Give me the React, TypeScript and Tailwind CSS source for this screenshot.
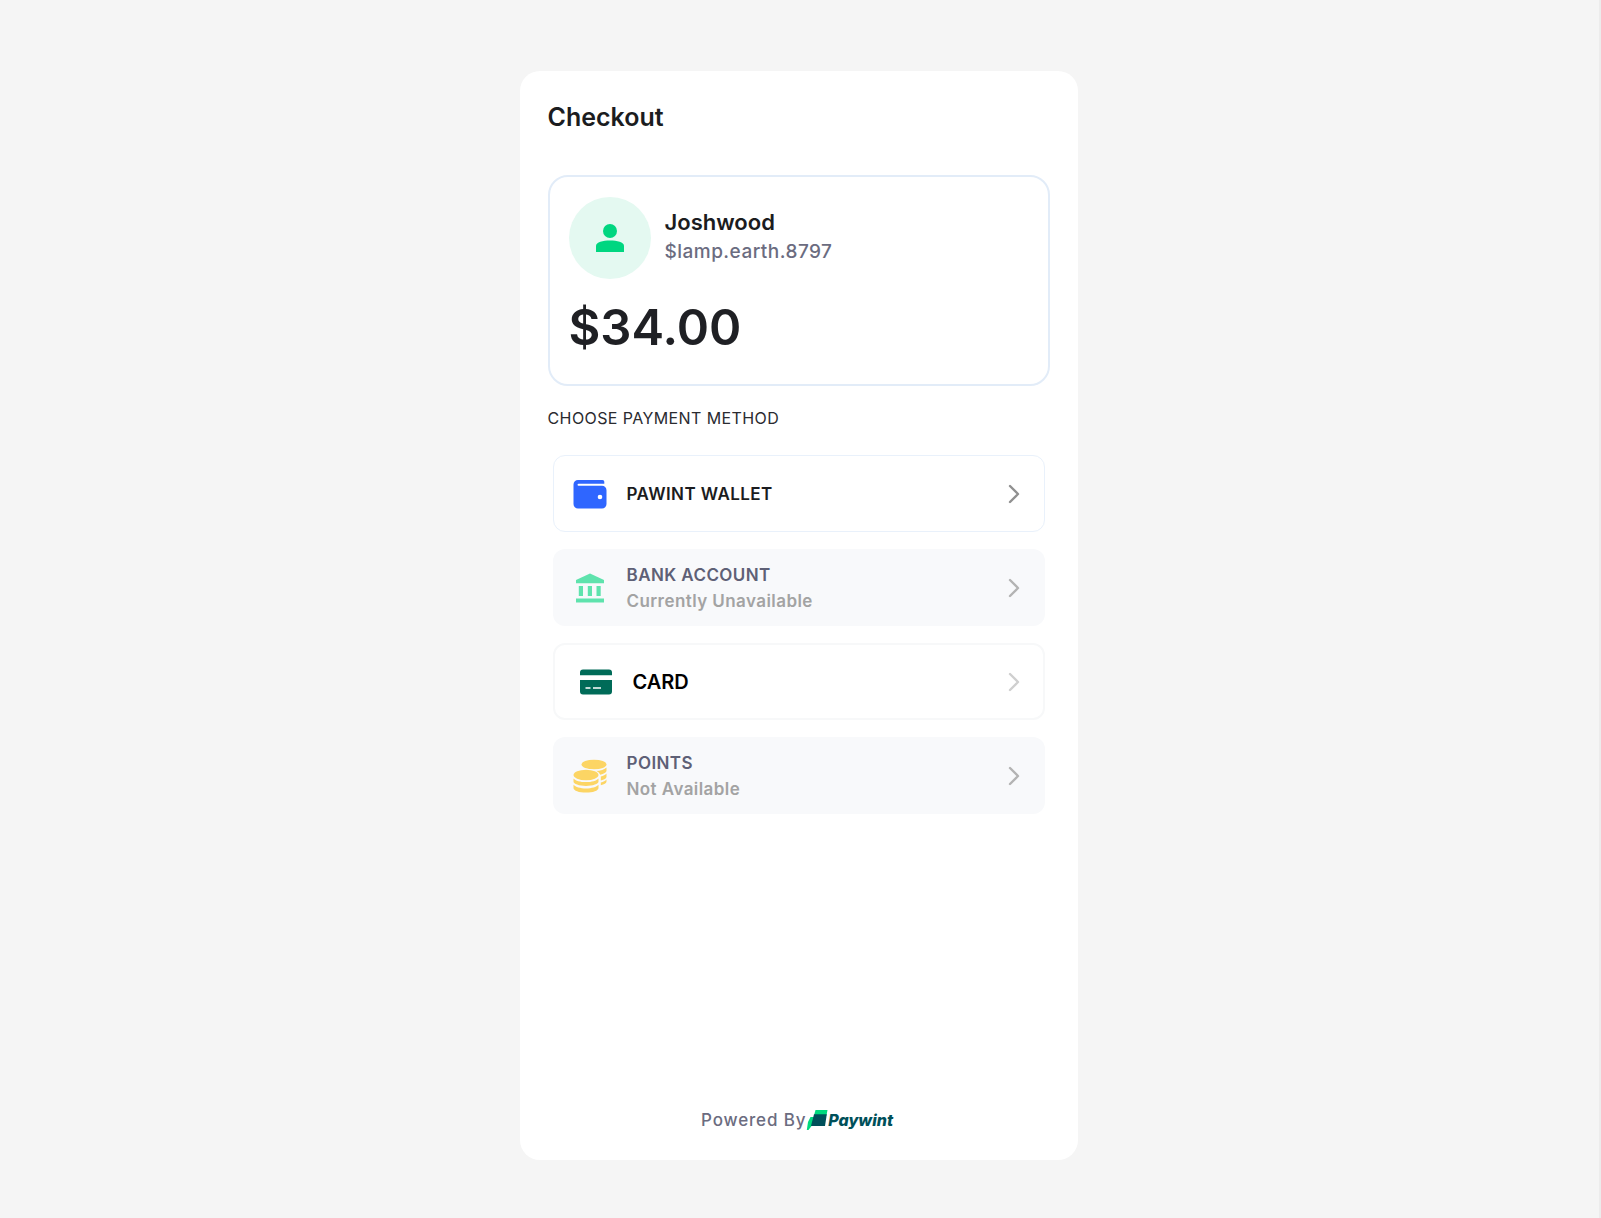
import { clsx } from 'clsx';
import type { ReactNode } from 'react';

type Method = {
  id: string;
  label: string;
  note?: string;
  icon: ReactNode;
  box: string;
  labelStyle: string;
  chevron: string;
  disabled?: boolean;
};

function WalletIcon() {
  return (
    <svg viewBox="0 0 34 34" className="size-[34px]" aria-hidden="true">
      <path
        d="M5 3h24.500a1.800 1.800 0 0 1 1.800 1.800V6.800H5.500a.9.9 0 0 0 0 1.900H29a4.500 4.500 0 0 1 4.500 4.500V27a4.500 4.500 0 0 1-4.500 4.500H5A4.500 4.500 0 0 1 .5 27V7.500A4.500 4.500 0 0 1 5 3Z"
        fill="#2f66ff"
      />
      <circle cx="27" cy="20" r="2.300" fill="#fff" />
    </svg>
  );
}

function BankIcon() {
  return (
    <svg viewBox="0 0 34 34" className="size-[34px]" fill="#5fe3ad" aria-hidden="true">
      <path d="M17 2.500 31 9v3.300H3V9L17 2.500Z" />
      <path d="M5.800 15h4.200v10H5.800zM14.800 15H19v10h-4.200zM23.500 15h4.200v10h-4.200zM3 27.500h28v4H3z" />
    </svg>
  );
}

function CardIcon() {
  return (
    <svg viewBox="0 0 34 34" className="size-[34px]" aria-hidden="true">
      <path
        d="M4 4.500h26a3 3 0 0 1 3 3v2.700H1V7.500a3 3 0 0 1 3-3ZM1 15h32v11.500a3 3 0 0 1-3 3H4a3 3 0 0 1-3-3V15Z"
        fill="#006b58"
      />
      <path d="M6.500 23h5M14 23h8" stroke="#fff" strokeWidth="1.600" />
    </svg>
  );
}

function CoinsIcon() {
  return (
    <svg viewBox="0 0 34 34" className="size-[34px]" fill="#fcd564" aria-hidden="true">
      <ellipse cx="21" cy="5.500" rx="12.500" ry="4.800" />
      <path d="M33.500 8.500v3.200c0 1.700-2.600 3.200-6.300 4-.8-1.600-2.400-2.900-4.700-3.700 5-.2 9.200-1.500 11-3.500ZM33.500 14.600v3.200c0 1.600-2.300 3-5.700 3.800v-4.100c2.500-.6 4.600-1.600 5.700-2.900ZM33.500 20.600v1.800c0 1.600-2.300 3-5.700 3.800v-2.700c2.500-.6 4.600-1.600 5.700-2.900Z" />
      <ellipse cx="13" cy="16" rx="13.500" ry="6.200" fill="#f8f9fb" />
      <ellipse cx="13" cy="16" rx="12.500" ry="5.200" />
      <path d="M.5 19.400c2 2.200 6.800 3.700 12.500 3.700s10.500-1.500 12.500-3.700v3.200c0 2.400-5.600 4.400-12.500 4.400S.5 25 .5 22.600v-3.200Z" />
      <path d="M.5 25.700c2 2.200 6.800 3.700 12.500 3.700s10.500-1.500 12.500-3.700v3.200c0 2.600-5.600 4.700-12.500 4.700S.5 31.500.5 28.900v-3.200Z" />
    </svg>
  );
}

function Chevron({ className }: { className: string }) {
  return (
    <svg viewBox="0 0 12 20" className={clsx('h-5 w-3 shrink-0', className)} fill="none" aria-hidden="true">
      <path d="m2 2 8 8-8 8" stroke="currentColor" strokeWidth="2.400" strokeLinecap="round" strokeLinejoin="round" />
    </svg>
  );
}

function PaywintMark() {
  return (
    <svg viewBox="0 0 22 22" className="size-[22px]" aria-hidden="true">
      <path d="M9.500 1H21.500l-1 5.500H8l1.500-5.500Z" fill="#00d97e" />
      <path d="M4.500 8H8v9H5.500L2.500 21H.8L2 13l2.500-5Z" fill="#00d97e" />
      <path d="M8 5.200h12.800L19 17H5l3-11.800Z" fill="#00505a" />
    </svg>
  );
}

const methods: Method[] = [
  {
    id: 'wallet',
    label: 'PAWINT WALLET',
    icon: <WalletIcon />,
    box: 'border border-[#e9f1fb] bg-white px-[19px]',
    labelStyle: 'text-[17px] tracking-wide text-[#1b1c20]',
    chevron: 'text-[#909090]',
  },
  {
    id: 'bank',
    label: 'BANK ACCOUNT',
    note: 'Currently Unavailable',
    icon: <BankIcon />,
    box: 'bg-[#f8f9fb] px-5',
    labelStyle: 'text-[17px] tracking-wide text-[#5e6076]',
    chevron: 'text-[#b3b3b3]',
    disabled: true,
  },
  {
    id: 'card',
    label: 'CARD',
    icon: <CardIcon />,
    box: 'border-2 border-[#f7f8f9] bg-white pl-6 pr-[18px]',
    labelStyle: 'text-xl text-black',
    chevron: 'text-[#cfcfcf]',
  },
  {
    id: 'points',
    label: 'POINTS',
    note: 'Not Available',
    icon: <CoinsIcon />,
    box: 'bg-[#f8f9fb] px-5',
    labelStyle: 'text-[17px] tracking-wide text-[#5e6076]',
    chevron: 'text-[#b3b3b3]',
    disabled: true,
  },
];

function MethodButton({ method }: { method: Method }) {
  return (
    <button
      type="button"
      disabled={method.disabled}
      className={clsx('flex h-[77px] w-full items-center rounded-xl text-left', method.box)}
    >
      {method.icon}
      <span className="ml-5 flex flex-1 flex-col">
        <span className={clsx('font-semibold leading-[26px]', method.labelStyle)}>{method.label}</span>
        {method.note && (
          <span className="text-[17px] font-semibold leading-[26px] tracking-wide text-[#a3a3a3]">
            {method.note}
          </span>
        )}
      </span>
      <Chevron className={clsx('mr-[5px]', method.chevron)} />
    </button>
  );
}

export default function App() {
  return (
    <div className="flex min-h-screen justify-center border-r-2 border-[#ececec] bg-[#f5f5f5] pt-[71px] pr-[18px] pb-[58px] pl-4 font-['Inter',sans-serif]">
      <main className="flex w-full max-w-[558px] flex-col rounded-[20px] bg-white px-7 pt-[30px] pb-[26px]">
        <h1 className="text-[25px] font-semibold leading-8 text-[#1b1c20]">Checkout</h1>

        <section className="mt-[42px] rounded-[20px] border-2 border-[#e2ecf8] px-[19px] pt-5 pb-[26px]">
          <div className="flex items-center">
            <div className="flex size-[82px] items-center justify-center rounded-full bg-[#e4f9f1]">
              <svg viewBox="0 0 28 28" className="size-7" fill="#00d680" aria-hidden="true">
                <circle cx="14" cy="7" r="7" />
                <path d="M0 22c0-4 7-5.500 14-5.500S28 18 28 22v6H0v-6Z" />
              </svg>
            </div>
            <div className="ml-[14px]">
              <p className="text-[22px] font-semibold leading-7 text-[#1b1c20]">Joshwood</p>
              <p className="text-[19px] font-medium leading-8 tracking-wide text-[#6b6c80]">$lamp.earth.8797</p>
            </div>
          </div>
          <p className="mt-[19px] text-[49px] font-semibold leading-[60px] text-[#1f2024]">$34.00</p>
        </section>

        <h2 className="mt-5 text-base leading-6 tracking-wide text-[#2a2b30]">CHOOSE PAYMENT METHOD</h2>

        <div className="mt-[25px] flex flex-col gap-[17px] px-[5px]">
          {methods.map((method) => (
            <MethodButton key={method.id} method={method} />
          ))}
        </div>

        <footer className="mt-auto flex items-center justify-center pr-[3px]">
          <span className="text-[17px] font-medium leading-7 tracking-wider text-[#6b6c80]">Powered By</span>
          <a href="#" className="flex items-center text-[#00505a]">
            <PaywintMark />
            <span className="text-base font-extrabold italic">Paywint</span>
          </a>
        </footer>
      </main>
    </div>
  );
}
